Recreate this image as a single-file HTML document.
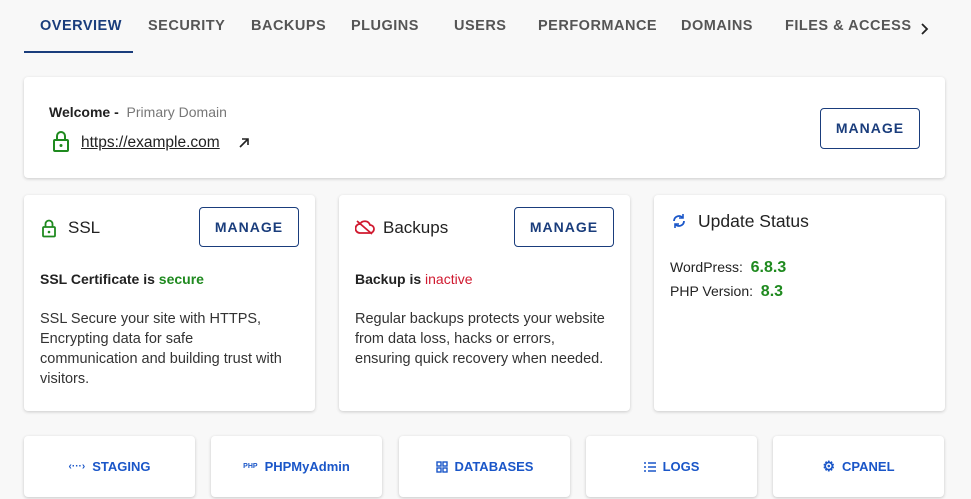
<!DOCTYPE html>
<html><head><style>
*{box-sizing:border-box;margin:0;padding:0}
body{width:971px;height:499px;overflow:hidden;background:#f8f8f8;font-family:"Liberation Sans",sans-serif;color:#222;position:relative}
.abs{position:absolute}
.tab{position:absolute;top:18px;font-size:14.5px;letter-spacing:.5px;color:#555;font-weight:bold}
.card{position:absolute;background:#fff;border-radius:4px;box-shadow:0 1px 3px rgba(0,0,0,.18)}
.btn{position:absolute;border:1px solid #1a3d7c;border-radius:4px;color:#1a3d7c;font-weight:bold;font-size:14px;letter-spacing:1px;text-align:center;background:#fff}
.t{position:absolute;font-size:14px}
.qb{position:absolute;top:436px;width:171px;height:61px;background:#fff;border-radius:4px;box-shadow:0 1px 3px rgba(0,0,0,.2);color:#1a56c8;font-weight:bold;font-size:13px;display:flex;align-items:center;justify-content:center;gap:7px}
</style></head><body>
<div class="tab" style="left:40px;color:#1a3d7c">OVERVIEW</div>
<div class="abs" style="left:24px;top:51px;width:109px;height:2px;background:#1a3d7c"></div>
<div class="tab" style="left:148px">SECURITY</div>
<div class="tab" style="left:251px">BACKUPS</div>
<div class="tab" style="left:351px">PLUGINS</div>
<div class="tab" style="left:454px">USERS</div>
<div class="tab" style="left:538px">PERFORMANCE</div>
<div class="tab" style="left:681px">DOMAINS</div>
<div class="tab" style="left:785px">FILES &amp; ACCESS</div>
<svg class="abs" style="left:919px;top:22px" width="10" height="14"><path d="M3 2l5 5-5 5" stroke="#222" stroke-width="1.8" fill="none"/></svg>

<div class="card" style="left:24px;top:77px;width:921px;height:101px"></div>
<div class="t" style="left:49px;top:104px;font-weight:bold">Welcome - <span style="font-weight:normal;color:#777">&nbsp;Primary Domain</span></div>
<svg class="abs" style="left:52px;top:130px" width="18" height="22"><path d="M5 10V6a4 4 0 0 1 8 0v4" stroke="#1f8a1f" stroke-width="2" fill="none"/><rect x="2" y="10" width="14" height="11" rx="1" stroke="#1f8a1f" stroke-width="2" fill="none"/><circle cx="9" cy="15.5" r="1.5" fill="#1f8a1f"/></svg>
<div class="t" style="left:81px;top:134px;font-size:15.5px;color:#222;text-decoration:underline">https://example.com</div>
<svg class="abs" style="left:238px;top:137px" width="12" height="12"><path d="M2 10L10 2M4 2h6v6" stroke="#222" stroke-width="1.6" fill="none"/></svg>
<div class="btn" style="left:820px;top:108px;width:100px;height:41px;line-height:39px">MANAGE</div>

<div class="card" style="left:24px;top:195px;width:291px;height:216px"></div>
<svg class="abs" style="left:41px;top:218px" width="16" height="20"><path d="M4.5 9V6a3.5 3.5 0 0 1 7 0v3" stroke="#1f8a1f" stroke-width="1.8" fill="none"/><rect x="2" y="9" width="12" height="9.5" rx="1" stroke="#1f8a1f" stroke-width="1.8" fill="none"/><circle cx="8" cy="14" r="1.3" fill="#1f8a1f"/></svg>
<div class="t" style="left:68px;top:218px;font-size:17px">SSL</div>
<div class="btn" style="left:199px;top:207px;width:100px;height:40px;line-height:38px">MANAGE</div>
<div class="t" style="left:40px;top:271px;font-weight:bold">SSL Certificate is <span style="color:#1f8a1f">secure</span></div>
<div class="t" style="left:40px;top:309px;line-height:20px;width:275px;color:#333;font-size:14.5px">SSL Secure your site with HTTPS,<br>Encrypting data for safe<br>communication and building trust with<br>visitors.</div>

<div class="card" style="left:339px;top:195px;width:291px;height:216px"></div>
<svg class="abs" style="left:355px;top:219px" width="20" height="16"><path d="M5 14h10a4 4 0 0 0 0-8 5.5 5.5 0 0 0-10-1 4.5 4.5 0 0 0 0 9z" stroke="#d0192f" stroke-width="1.8" fill="none"/><path d="M2 2l15 13" stroke="#d0192f" stroke-width="1.8"/></svg>
<div class="t" style="left:383px;top:218px;font-size:17px">Backups</div>
<div class="btn" style="left:514px;top:207px;width:100px;height:40px;line-height:38px">MANAGE</div>
<div class="t" style="left:355px;top:271px;font-weight:bold">Backup is <span style="color:#d0192f;font-weight:normal">inactive</span></div>
<div class="t" style="left:355px;top:309px;line-height:20px;width:275px;color:#333;font-size:14.5px">Regular backups protects your website<br>from data loss, hacks or errors,<br>ensuring quick recovery when needed.</div>

<div class="card" style="left:654px;top:195px;width:291px;height:216px"></div>
<svg class="abs" style="left:671px;top:212px" width="16" height="18"><path d="M3 9a5 5 0 0 1 8.5-3.5M13 9a5 5 0 0 1-8.5 3.5" stroke="#1a56c8" stroke-width="1.8" fill="none"/><path d="M12 2v4h-4M4 16v-4h4" stroke="#1a56c8" stroke-width="1.6" fill="none"/></svg>
<div class="t" style="left:698px;top:211px;font-size:17.5px;font-weight:500">Update Status</div>
<div class="t" style="left:670px;top:259px">WordPress: &nbsp;<span style="color:#1f8a1f;font-weight:bold;font-size:16px">6.8.3</span></div>
<div class="t" style="left:670px;top:283px">PHP Version: &nbsp;<span style="color:#1f8a1f;font-weight:bold;font-size:16px">8.3</span></div>

<div class="qb" style="left:24px"><span style="font-size:10px">‹···›</span>STAGING</div>
<div class="qb" style="left:211px"><span style="font-size:7px">PHP</span>PHPMyAdmin</div>
<div class="qb" style="left:399px"><svg width="12" height="12"><g stroke="#1a56c8" stroke-width="1.4" fill="none"><rect x="1" y="1" width="4" height="4"/><rect x="7" y="1" width="4" height="4"/><rect x="1" y="7" width="4" height="4"/><rect x="7" y="7" width="4" height="4"/></g></svg>DATABASES</div>
<div class="qb" style="left:586px"><svg width="12" height="10"><g stroke="#1a56c8" stroke-width="1.5"><path d="M0 1h2M4 1h8M0 5h2M4 5h8M0 9h2M4 9h8"/></g></svg>LOGS</div>
<div class="qb" style="left:773px"><span style="font-size:14px">⚙</span>CPANEL</div>
</body></html>
